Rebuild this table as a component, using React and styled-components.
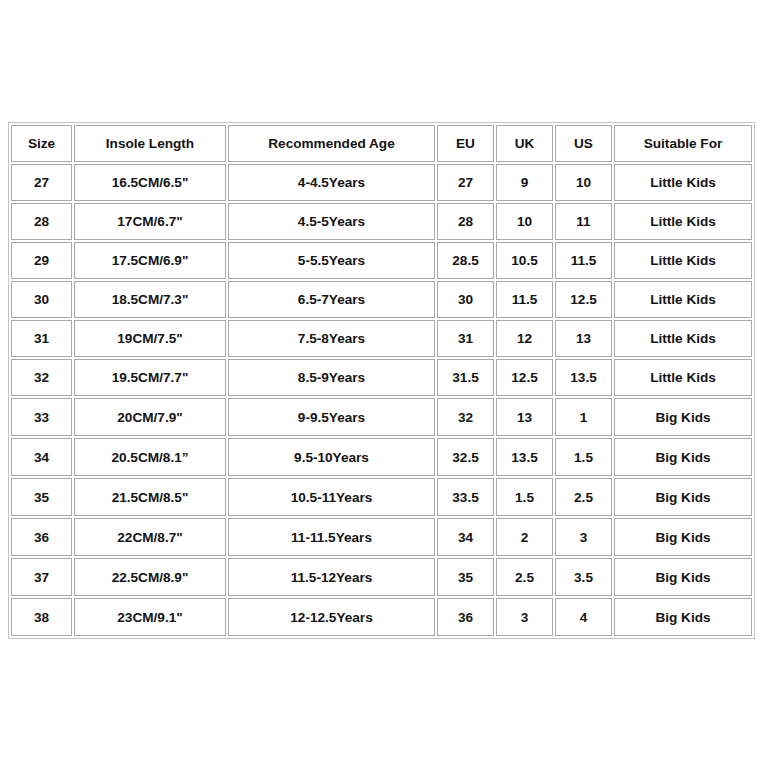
import styled, { createGlobalStyle } from "styled-components"

const GlobalStyle = createGlobalStyle`
  html, body {
    margin: 0;
    background: #fff;
  }
`

const columns = [
  { label: "Size", width: 61 },
  { label: "Insole Length", width: 152 },
  { label: "Recommended Age", width: 207 },
  { label: "EU", width: 57 },
  { label: "UK", width: 57 },
  { label: "US", width: 57 },
  { label: "Suitable For", width: 138 },
]

const rows = [
  ["27", "16.5CM/6.5\"", "4-4.5Years", "27", "9", "10", "Little Kids"],
  ["28", "17CM/6.7\"", "4.5-5Years", "28", "10", "11", "Little Kids"],
  ["29", "17.5CM/6.9\"", "5-5.5Years", "28.5", "10.5", "11.5", "Little Kids"],
  ["30", "18.5CM/7.3\"", "6.5-7Years", "30", "11.5", "12.5", "Little Kids"],
  ["31", "19CM/7.5\"", "7.5-8Years", "31", "12", "13", "Little Kids"],
  ["32", "19.5CM/7.7\"", "8.5-9Years", "31.5", "12.5", "13.5", "Little Kids"],
  ["33", "20CM/7.9\"", "9-9.5Years", "32", "13", "1", "Big Kids"],
  ["34", "20.5CM/8.1\u201d", "9.5-10Years", "32.5", "13.5", "1.5", "Big Kids"],
  ["35", "21.5CM/8.5\"", "10.5-11Years", "33.5", "1.5", "2.5", "Big Kids"],
  ["36", "22CM/8.7\"", "11-11.5Years", "34", "2", "3", "Big Kids"],
  ["37", "22.5CM/8.9\"", "11.5-12Years", "35", "2.5", "3.5", "Big Kids"],
  ["38", "23CM/9.1\"", "12-12.5Years", "36", "3", "4", "Big Kids"],
]

export default function App() {
  return (
    <Page>
      <GlobalStyle />
      <SizeTable>
        <thead>
          <tr>
            {columns.map((col) => (
              <HeaderCell key={col.label} $width={col.width}>
                {col.label}
              </HeaderCell>
            ))}
          </tr>
        </thead>
        <tbody>
          {rows.map((row, index) => (
            <tr key={row[0]}>
              {row.map((value, i) => (
                // the lower rows of the chart are a pixel taller
                <Cell key={i} $tall={index >= 6}>
                  {value}
                </Cell>
              ))}
            </tr>
          ))}
        </tbody>
      </SizeTable>
    </Page>
  )
}

const Page = styled.div`
  width: 768px;
  height: 768px;
  padding: 122px 0 0 8px;
  box-sizing: border-box;
  background: #fff;
`

const SizeTable = styled.table`
  table-layout: fixed;
  border-collapse: separate;
  border-spacing: 2px;
  border: 1px solid #c4c4c4;
  font-family: "Liberation Sans", Arial, sans-serif;
  font-weight: bold;
  font-size: 13.6px;
  color: #141414;
`

const HeaderCell = styled.th`
  box-sizing: border-box;
  width: ${(props) => props.$width}px;
  height: 37px;
  padding: 0;
  border: 1px solid #a9a9a9;
  text-align: center;
  vertical-align: middle;
  font-weight: bold;
`

const Cell = styled.td`
  box-sizing: border-box;
  height: ${(props) => (props.$tall ? 38 : 37)}px;
  padding: 0;
  border: 1px solid #a9a9a9;
  text-align: center;
  vertical-align: middle;
`
